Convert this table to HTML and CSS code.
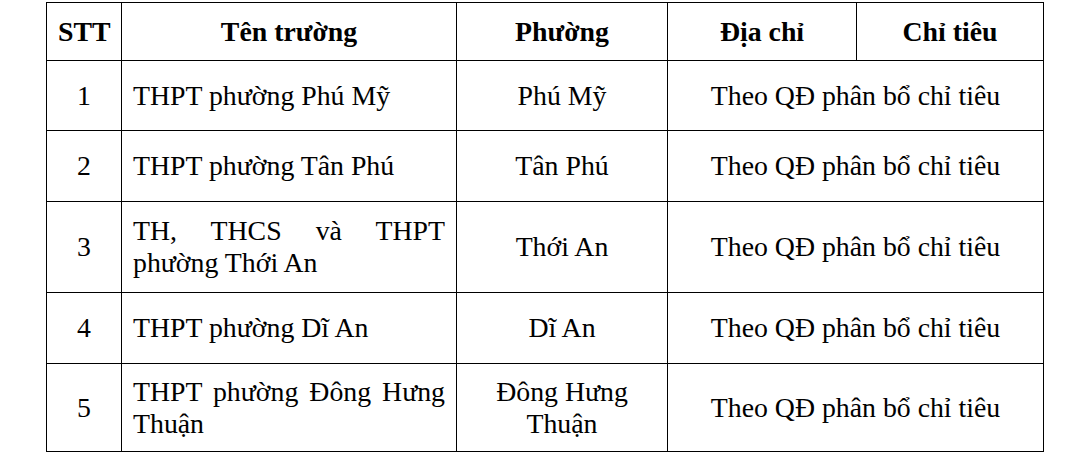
FILE: index.html
```html
<!DOCTYPE html>
<html lang="vi">
<head>
<meta charset="utf-8">
<title>Danh sách trường</title>
<link rel="stylesheet" href="styles.css">
</head>
<body>
<div class="wrap">
<table class="tbl">
  <colgroup>
    <col class="c-stt">
    <col class="c-name">
    <col class="c-ward">
    <col class="c-addr">
    <col class="c-quota">
  </colgroup>
  <thead>
    <tr class="r-head">
      <th>STT</th>
      <th>Tên trường</th>
      <th>Phường</th>
      <th>Địa chỉ</th>
      <th>Chỉ tiêu</th>
    </tr>
  </thead>
  <tbody>
    <tr class="r-1">
      <td class="ctr">1</td>
      <td class="name">THPT phường Phú Mỹ</td>
      <td class="ctr">Phú Mỹ</td>
      <td class="ctr" colspan="2">Theo QĐ phân bổ chỉ tiêu</td>
    </tr>
    <tr class="r-1b">
      <td class="ctr">2</td>
      <td class="name">THPT phường Tân Phú</td>
      <td class="ctr">Tân Phú</td>
      <td class="ctr" colspan="2">Theo QĐ phân bổ chỉ tiêu</td>
    </tr>
    <tr class="r-2">
      <td class="ctr">3</td>
      <td class="name">TH, THCS và THPT phường Thới An</td>
      <td class="ctr">Thới An</td>
      <td class="ctr" colspan="2">Theo QĐ phân bổ chỉ tiêu</td>
    </tr>
    <tr class="r-1b">
      <td class="ctr">4</td>
      <td class="name">THPT phường Dĩ An</td>
      <td class="ctr">Dĩ An</td>
      <td class="ctr" colspan="2">Theo QĐ phân bổ chỉ tiêu</td>
    </tr>
    <tr class="r-3">
      <td class="ctr">5</td>
      <td class="name">THPT phường Đông Hưng Thuận</td>
      <td class="ctr">Đông Hưng<br>Thuận</td>
      <td class="ctr" colspan="2">Theo QĐ phân bổ chỉ tiêu</td>
    </tr>
  </tbody>
</table>
</div>
</body>
</html>
```

FILE: styles.css
```css
html, body {
  margin: 0;
  padding: 0;
  background: #ffffff;
}

.wrap {
  padding: 2px 0 0 46px;
}

.tbl {
  border-collapse: collapse;
  table-layout: fixed;
  width: 997px;
  font-family: "Liberation Serif", "Times New Roman", serif;
  font-size: 27.8px;
  line-height: 32px;
  color: #000000;
}

.c-stt { width: 75px; }
.c-name { width: 335px; }
.c-ward { width: 211px; }
.c-addr { width: 189px; }
.c-quota { width: 187px; }

.tbl th,
.tbl td {
  border: 1px solid #000000;
  padding: 0 11px;
  vertical-align: middle;
}

.tbl th {
  font-weight: bold;
  text-align: center;
}

.ctr {
  text-align: center;
}

.name {
  text-align: justify;
}

.r-head th { height: 57px; }
.r-1 td { height: 69px; }
.r-1b td { height: 70px; }
.r-2 td { height: 90px; }
.r-3 td { height: 87px; }
```
